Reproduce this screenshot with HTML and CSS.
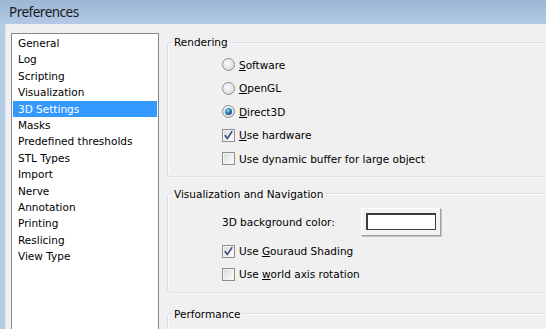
FILE: index.html
```html
<!DOCTYPE html>
<html>
<head>
<meta charset="utf-8">
<link rel="stylesheet" href="styles.css">
</head>
<body>
<div class="window">
  <div class="titlebar">Preferences</div>
  <div class="frame">
    <div class="client">
      <ul class="nav">
        <li>General</li>
        <li>Log</li>
        <li>Scripting</li>
        <li>Visualization</li>
        <li class="selected">3D Settings</li>
        <li>Masks</li>
        <li>Predefined thresholds</li>
        <li>STL Types</li>
        <li>Import</li>
        <li>Nerve</li>
        <li>Annotation</li>
        <li>Printing</li>
        <li>Reslicing</li>
        <li>View Type</li>
      </ul>
      <div class="panel">
        <fieldset class="group group-render">
          <legend>Rendering</legend>
          <div class="rows">
            <div class="opt"><span class="radio"></span><span><u>S</u>oftware</span></div>
            <div class="opt"><span class="radio"></span><span><u>O</u>penGL</span></div>
            <div class="opt"><span class="radio checked"></span><span><u>D</u>irect3D</span></div>
            <div class="opt"><span class="check checked"><svg viewBox="0 0 11 11" width="11" height="11"><path d="M2.2 5.6 L4.3 8.6 L8.9 1.6" fill="none" stroke="#3b4f86" stroke-width="1.7" stroke-linecap="round" stroke-linejoin="round"/></svg></span><span><u>U</u>se hardware</span></div>
            <div class="opt"><span class="check"></span><span>Use dynamic buffer for large object</span></div>
          </div>
        </fieldset>
        <fieldset class="group group-vis">
          <legend>Visualization and Navigation</legend>
          <div class="rows">
            <div class="color-row"><span class="color-label">3D background color:</span><span class="color-btn"><span class="swatch"></span></span></div>
            <div class="opt"><span class="check checked"><svg viewBox="0 0 11 11" width="11" height="11"><path d="M2.2 5.6 L4.3 8.6 L8.9 1.6" fill="none" stroke="#3b4f86" stroke-width="1.7" stroke-linecap="round" stroke-linejoin="round"/></svg></span><span>Use <u>G</u>ouraud Shading</span></div>
            <div class="opt"><span class="check"></span><span>Use <u>w</u>orld axis rotation</span></div>
          </div>
        </fieldset>
        <fieldset class="group group-perf">
          <legend>Performance</legend>
          <div class="rows perf-rows"></div>
        </fieldset>
      </div>
    </div>
  </div>
</div>
</body>
</html>
```

FILE: styles.css
```css
html, body {
  margin: 0;
  padding: 0;
}
body {
  width: 546px;
  height: 329px;
  overflow: hidden;
  font-family: "DejaVu Sans", Verdana, sans-serif;
  font-size: 10.5px;
  color: #000;
}
.window {
  width: 546px;
  height: 329px;
  display: flex;
  flex-direction: column;
  background: #b3cae4;
}
.titlebar {
  flex: none;
  height: 24px;
  box-sizing: border-box;
  padding: 3px 0 0 9px;
  font-family: "Noto Sans", "Open Sans", sans-serif;
  font-size: 13.5px;
  letter-spacing: -0.5px;
  line-height: 18px;
  color: #1b1b1b;
  background: linear-gradient(#9cb6d4, #b2cae4);
}
.frame {
  flex: 1;
  display: flex;
  min-height: 0;
  padding-left: 5px;
  background: #b5cce6;
}
.client {
  flex: 1;
  min-width: 0;
  display: flex;
  gap: 8px;
  padding: 8px 0 0 5px;
  border-top: 1px solid #e4ecf4;
  border-left: 1px solid #dbe5ef;
  background: #f0f0f0;
  overflow: hidden;
}
.nav {
  flex: none;
  width: 148px;
  height: 320px;
  box-sizing: border-box;
  margin: 0;
  padding: 1px;
  list-style: none;
  background: #fff;
  border: 1px solid #828790;
}
.nav li {
  height: 16.4px;
  line-height: 16.4px;
  padding-left: 5px;
  white-space: nowrap;
}
.nav li.selected {
  background: #3399ff;
  color: #fff;
}
.panel {
  flex: none;
  width: 420px;
  padding-top: 2px;
}
.group {
  margin: 0;
  padding: 0 0 0 4px;
  border: 1px solid #d5dfe5;
  border-radius: 3px;
  box-shadow: inset 1px 1px 0 #fbfbfb, 0 1px 0 #fbfbfb;
}
.group legend {
  padding: 0 2px;
  line-height: 14px;
}
.rows {
  padding-left: 50px;
}
.group-render .rows {
  padding-top: 4px;
  padding-bottom: 5px;
}
.opt {
  height: 23.5px;
  display: flex;
  align-items: center;
  gap: 4px;
  white-space: nowrap;
}
.group-vis {
  margin-top: 10px;
}
.group-vis .rows {
  padding-top: 7px;
  padding-bottom: 6px;
}
.group-vis .opt {
  height: 23px;
}
.group-perf {
  margin-top: 14px;
}
.perf-rows {
  height: 40px;
}
.radio {
  flex: none;
  width: 13px;
  height: 13px;
  box-sizing: border-box;
  border-radius: 50%;
  border: 1px solid #8f8f8f;
  background: radial-gradient(circle at 40% 35%, #fafafa 0%, #e6e6e6 55%, #cfcfcf 100%);
  display: flex;
  align-items: center;
  justify-content: center;
}
.radio.checked::after {
  content: "";
  width: 7px;
  height: 7px;
  border-radius: 50%;
  background: radial-gradient(circle at 40% 35%, #a9e4ff 0%, #2f8fc8 35%, #0d4f82 75%, #08355a 100%);
}
.check {
  flex: none;
  width: 13px;
  height: 13px;
  box-sizing: border-box;
  border: 1px solid #8e8f8f;
  background: linear-gradient(135deg, #d8d8d8, #f4f4f4 70%, #ffffff);
  box-shadow: inset 0 0 0 1px #f4f4f4;
  display: flex;
  align-items: center;
  justify-content: center;
}
.check svg {
  display: block;
}
.color-row {
  height: 28px;
  display: flex;
  align-items: center;
  margin-bottom: 4px;
}
.color-label {
  width: 139px;
  flex: none;
}
.color-btn {
  flex: none;
  width: 80px;
  height: 28px;
  box-sizing: border-box;
  display: flex;
  align-items: center;
  justify-content: center;
  background: #f3f3f3;
  border: 1px solid;
  border-color: #ffffff #a0a0a0 #a0a0a0 #ffffff;
  box-shadow: 1px 1px 0 #c4c4c4;
}
.swatch {
  width: 70px;
  height: 17px;
  box-sizing: border-box;
  background: #fff;
  border: 1px solid #3c3c3c;
  border-top-width: 2px;
  border-left-width: 2px;
}
```
